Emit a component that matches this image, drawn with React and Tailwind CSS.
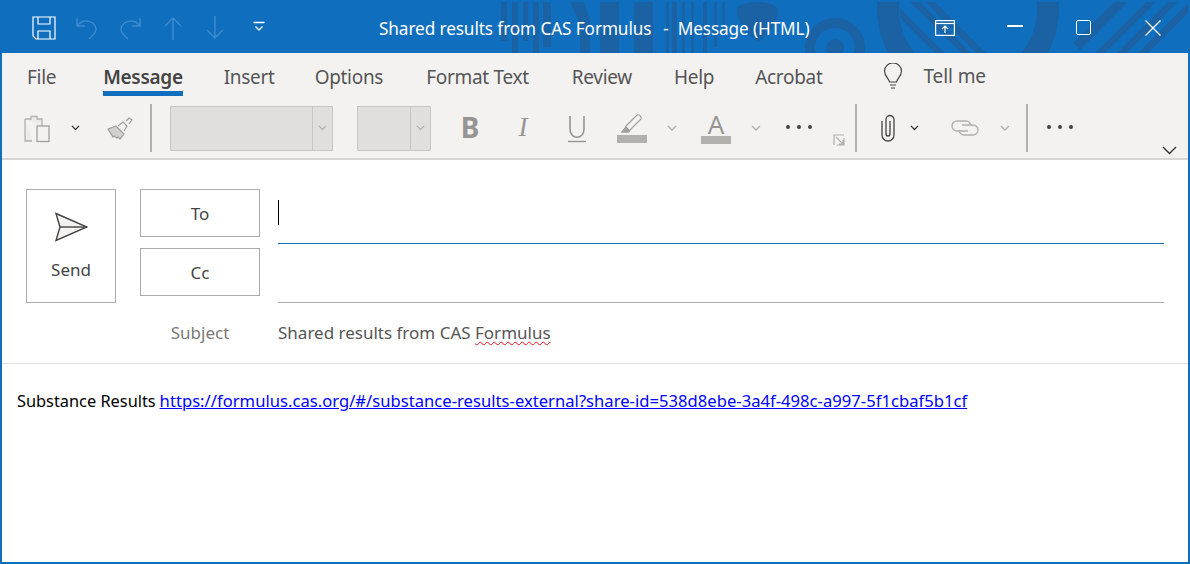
import React from "react";

const F = { fontFamily: '"Noto Sans", "Open Sans", sans-serif' };

function Chev({ c = "#444", w = 9, cls = "" }) {
  return (
    <svg width={w} height={w * 0.6} viewBox="0 0 10 6" className={cls}>
      <path d="M1 1l4 4 4-4" fill="none" stroke={c} strokeWidth="1.4" />
    </svg>
  );
}
function Dots({ c = "#444" }) {
  return (
    <svg width="28" height="6" viewBox="0 0 28 6">
      <circle cx="3" cy="3" r="2" fill={c} />
      <circle cx="14" cy="3" r="2" fill={c} />
      <circle cx="25" cy="3" r="2" fill={c} />
    </svg>
  );
}
function Sep() {
  return <div className="w-[2px] h-12 bg-[#b3b0ad] shrink-0" />;
}
function Tab({ children, active, cls = "" }) {
  return (
    <div className={`relative text-[19px] leading-[26px] tracking-[-0.3px] whitespace-nowrap ${cls} ${active ? "font-semibold text-[#444]" : "text-[#555]"}`}>
      {children}
      {active && <div className="absolute left-0 right-0 top-[27px] h-[5px] bg-[#106ebe]" />}
    </div>
  );
}

function Pattern() {
  return (
    <svg className="absolute left-[400px] top-[2px]" width="790" height="51" viewBox="0 0 790 51" fill="#1a62a4">
      <rect x="101" y="0" width="6" height="39" />
      <rect x="112" y="0" width="6" height="51" />
      <rect x="123" y="0" width="5.5" height="39" />
      <rect x="133" y="0" width="6" height="51" />
      <rect x="143" y="0" width="8" height="45" />
      <path d="M170 0H184L190 20V51H180V22Z" />
      <rect x="200" y="0" width="19" height="51" />
      <rect x="234" y="0" width="19" height="51" />
      <rect x="266" y="0" width="3" height="51" />
      <rect x="272" y="0" width="5" height="51" />
      <rect x="282" y="0" width="3" height="51" />
      <rect x="291" y="0" width="3" height="51" />
      <rect x="303" y="0" width="4" height="51" />
      <rect x="314" y="0" width="3" height="45" />
      <rect x="322" y="0" width="3" height="33" />
      <path d="M337 8C337 3 345 0 357 0C370 0 378 3 378 10C378 22 366 34 358 40C348 32 337 20 337 8Z" />
      <circle cx="435" cy="46" r="25" fill="none" stroke="#1a62a4" strokeWidth="10" />
      <circle cx="435" cy="46" r="9" />
      <circle cx="568" cy="7" r="80" fill="none" stroke="#1a62a4" strokeWidth="22" />
      <path d="M500 6L545 51H535L500 16Z" />
      <path d="M510 0H520L571 51H561Z" />
      <path d="M525 0H535L586 51H576Z" />
      <path d="M673 41L680 48L728 0H714Z" />
      <path d="M746 0H756L705 51H695Z" />
      <path d="M768 0H778L727 51H717Z" />
      <path d="M789 0H790V9L748 51H738Z" />
    </svg>
  );
}

function Titlebar() {
  const b = "#3d8bd0";
  return (
    <div className="relative h-[53px] bg-[#106ebe] flex items-center overflow-hidden shrink-0 pl-[32px] pt-[2px]">
      <Pattern />
      <div className="relative flex items-center">
        <svg width="24" height="24" viewBox="0 0 24 24" fill="none" stroke="#fff" strokeWidth="1.2">
          <path d="M1 1h22v22H4l-3-3z" /><path d="M6 1v7h12V1M6 23v-8h12v8" />
        </svg>
        <svg width="24" height="24" viewBox="0 0 24 24" fill="none" stroke={b} strokeWidth="1.4" className="ml-[19px]">
          <path d="M2 2v8h8M2 10c3-4 6-5 9-5 6 0 10 4 10 8 0 3-2 5-4 7l-3 3" />
        </svg>
        <svg width="24" height="24" viewBox="0 0 24 24" fill="none" stroke={b} strokeWidth="1.4" className="ml-[19px]">
          <path d="M22 2v8h-8M22 10c-3-4-6-5-9-5-6 0-10 4-10 8 0 3 2 5 4 7l3 3" />
        </svg>
        <svg width="18" height="24" viewBox="0 0 18 24" fill="none" stroke={b} strokeWidth="1.4" className="ml-[22px]">
          <path d="M9 24V2M1 10l8-8 8 8" />
        </svg>
        <svg width="18" height="24" viewBox="0 0 18 24" fill="none" stroke={b} strokeWidth="1.4" className="ml-[24px]">
          <path d="M9 0v22M1 14l8 8 8-8" />
        </svg>
        <svg width="12" height="12" viewBox="0 0 12 12" fill="none" stroke="#fff" strokeWidth="1.3" className="ml-[29px] mb-[2px]">
          <path d="M0.5 1.5h11M2.5 5.5L6 9l3.5-3.5" />
        </svg>
      </div>
      <div className="absolute left-[379px] top-[17px] text-white text-[17.2px] leading-[24px] whitespace-pre">
        <span className="tracking-[-0.1px]">Shared results from CAS Formulus</span>
        <span className="ml-[3px]">  -  </span>
        <span className="tracking-[-0.12px]">Message (HTML)</span>
      </div>
      <div className="absolute right-0 top-[2px] h-[51px] flex items-center">
        <svg width="20" height="16" viewBox="0 0 20 16" fill="none" stroke="#fff" strokeWidth="1.2" className="mr-[52px]">
          <rect x="0.6" y="0.6" width="18.8" height="14.8" /><path d="M1 3.5h18" /><path d="M10 13V6M7 9l3-3 3 3" />
        </svg>
        <div className="w-[16px] h-[1.4px] bg-white mr-[53px] mb-[3px]" />
        <div className="w-[15px] h-[15px] border-[1.3px] border-white rounded-[2px] mr-[54px]" />
        <svg width="16" height="16" viewBox="0 0 16 16" stroke="#fff" strokeWidth="1.3" className="mr-[29px]">
          <path d="M0.5 0.5l15 15M15.5 0.5l-15 15" />
        </svg>
      </div>
    </div>
  );
}

function Ribbon() {
  return (
    <div className="relative h-[107px] bg-[#f3f2f1] border-b-2 border-[#d8d6d4] shrink-0">
      <div className="flex items-center h-[49px] pl-[25px] pb-[1px]">
        <Tab>File</Tab>
        <Tab active cls="ml-[47px]">Message</Tab>
        <Tab cls="ml-[41px]">Insert</Tab>
        <Tab cls="ml-[40px]">Options</Tab>
        <Tab cls="ml-[43px]">Format Text</Tab>
        <Tab cls="ml-[43px]">Review</Tab>
        <Tab cls="ml-[42px]">Help</Tab>
        <Tab cls="ml-[41px]">Acrobat</Tab>
        <div className="flex items-center gap-[20px] ml-[61px] mt-[-2px]">
          <svg width="20" height="26" viewBox="0 0 20 26" fill="none" stroke="#444" strokeWidth="1.2">
            <path d="M6.5 19c0-3-5-5-5-11a8.5 8 0 0 1 17 0c0 6-5 8-5 11zM7 22h6M8 25h4" />
          </svg>
          <div className="text-[#555] text-[19px] leading-[26px] tracking-[-0.1px]">Tell me</div>
        </div>
      </div>
      <div className="flex items-center h-[52px] pl-[22px]">
        <svg width="27" height="29" viewBox="0 0 27 29" fill="#ebebeb" stroke="#b3b0ad" strokeWidth="1.3">
          <path d="M1 5h6V2.5h6V5h5v7M8 27H1V5" /><rect x="13" y="12" width="12" height="15.5" fill="#f3f2f1" stroke="#a19f9d" />
        </svg>
        <Chev cls="ml-[20px] mt-[-1px]" c="#333" />
        <svg width="28" height="26" viewBox="0 0 28 26" className="ml-[27px]" fill="none" stroke="#a19f9d" strokeWidth="1.2">
          <path d="M1 14l8-3 8 8-4 5-2-2-1 1-3-2-1 1z" fill="#d2d0ce" /><path d="M11 11l5-4 4 4-3 5M19 6l3-3 3 2-3 4" />
        </svg>
        <div className="ml-[15px]"><Sep /></div>
        <div className="ml-[18px] flex h-[45px] w-[163px] bg-[#e1dfdd] border border-[#c8c6c4]">
          <div className="flex-1" />
          <div className="w-[20px] border-l border-[#c8c6c4] flex items-center justify-center"><Chev c="#b3b0ad" /></div>
        </div>
        <div className="ml-[24px] flex h-[45px] w-[74px] bg-[#e1dfdd] border border-[#c8c6c4]">
          <div className="flex-1" />
          <div className="w-[20px] border-l border-[#c8c6c4] flex items-center justify-center"><Chev c="#b3b0ad" /></div>
        </div>
        <div className="ml-[29px] w-[20px] text-center text-[#979593] text-[28px] font-bold leading-[30px] mt-[-2px]">B</div>
        <div className="ml-[35px] w-[16px] text-center text-[#979593] text-[27px] leading-[30px] italic mt-[-2px]" style={{ fontFamily: '"Liberation Serif", serif' }}>I</div>
        <svg width="18" height="29" viewBox="0 0 18 29" fill="none" stroke="#979593" className="ml-[37px]">
          <path d="M2 2v13c0 11 14 11 14 0V2" strokeWidth="1.6" /><path d="M0 27.5h18" strokeWidth="1.4" />
        </svg>
        <div className="ml-[31px] w-[30px] flex flex-col items-center">
          <svg width="28" height="22" viewBox="0 0 28 22" fill="none" stroke="#a19f9d" strokeWidth="1.2">
            <path d="M8 13L19 2c2-1 5 2 4 4L12 17l-4 1zM8 14l-4 5 7 0 1-2" /><path d="M4 19l4-5 3 3-1 2z" fill="#a19f9d" />
          </svg>
          <div className="w-[30px] h-[8px] bg-[#b3b0ad]" />
        </div>
        <Chev cls="ml-[20px]" c="#b3b0ad" w={10} />
        <div className="ml-[24px] w-[30px] flex flex-col items-center">
          <div className="h-[22px] text-[#979593] text-[26px] leading-[22px]">A</div>
          <div className="w-[30px] h-[8px] bg-[#b3b0ad] mt-[1px]" />
        </div>
        <Chev cls="ml-[20px]" c="#b3b0ad" w={10} />
        <div className="ml-[24px] mb-[2px]"><Dots /></div>
        <svg width="12" height="12" viewBox="0 0 12 12" fill="none" stroke="#b3b0ad" strokeWidth="1.2" className="ml-[20px] mt-[23px]">
          <path d="M1 11V1h10M4 11h7V4M3 3l7 7M10 6v4H6" />
        </svg>
        <div className="ml-[10px]"><Sep /></div>
        <svg width="16" height="28" viewBox="0 0 16 28" fill="none" stroke="#444" strokeWidth="1.3" className="ml-[23px]">
          <path d="M2 7v14a6 6 0 0 0 12 0V5.5a4 4 0 0 0-8 0V20a2 2 0 0 0 4 0V7" />
        </svg>
        <Chev cls="ml-[14px]" c="#333" />
        <svg width="28" height="16" viewBox="0 0 28 16" fill="none" stroke="#b3b0ad" strokeWidth="1.4" className="ml-[32px]">
          <path d="M17 11H6a5 5 0 0 1 0-10h9a5 5 0 0 1 5 5" /><path d="M11 5h11a5 5 0 0 1 0 10h-9a5 5 0 0 1-5-5" />
        </svg>
        <Chev cls="ml-[21px]" c="#b3b0ad" w={10} />
        <div className="ml-[16px]"><Sep /></div>
        <div className="ml-[18px] mb-[2px]"><Dots /></div>
      </div>
      <svg width="15" height="9" viewBox="0 0 15 9" fill="none" stroke="#333" strokeWidth="1.4" className="absolute right-[11px] top-[93px]">
        <path d="M1 1l6.5 6.5L14 1" />
      </svg>
    </div>
  );
}

function Btn({ children }) {
  return (
    <div className="w-[120px] h-[48px] pt-[1px] border border-[#ababab] flex items-center justify-center text-[#444] text-[17px]">
      {children}
    </div>
  );
}

function Header() {
  return (
    <div className="h-[204px] border-b border-[#e1dfdd] pl-[24px] pt-[29px] flex shrink-0">
      <div className="w-[90px] h-[114px] border border-[#ababab] flex flex-col items-center text-[#444] text-[17px]">
        <svg width="34" height="30" viewBox="0 0 34 30" fill="none" stroke="#444" strokeWidth="1.4" className="mt-[22px]">
          <path d="M2 1.5L33 15 2 28.5 6 15z" fill="#f3f2f1" /><path d="M6 15h27" />
        </svg>
        <div className="mt-[16px] leading-[24px]">Send</div>
      </div>
      <div className="ml-[24px] flex flex-col gap-[11px]">
        <Btn>To</Btn>
        <Btn>Cc</Btn>
        <div className="w-[120px] text-center mt-[14px] text-[17px] leading-[24px] text-[#7a7a7a]">Subject</div>
      </div>
      <div className="ml-[18px] w-[886px] flex flex-col">
        <div className="h-[55px] border-b border-[#106ebe] pt-[11px]">
          <div className="w-[1px] h-[25px] bg-black" />
        </div>
        <div className="h-[59px] border-b border-[#ababab]" />
        <div className="mt-[18px] text-[17px] leading-[24px] text-[#555] whitespace-pre">
          Shared results from CAS{" "}
          <span className="underline decoration-wavy decoration-[#e81123] decoration-1 underline-offset-2">Formulus</span>
        </div>
      </div>
    </div>
  );
}

export default function App() {
  return (
    <div className="w-[1190px] h-[564px] overflow-hidden bg-white flex flex-col border-x-2 border-b-2 border-[#106ebe] box-border" style={F}>
      <div className="mx-[-2px]"><Titlebar /></div>
      <Ribbon />
      <Header />
      <div className="pl-[15px] pt-[25px] text-[16.6px] leading-[24px] text-black whitespace-nowrap">
        <span className="text-[16.35px]">Substance Results</span>
        <span className="text-[15px]"> </span>
        <span className="text-[#0000ff] underline tracking-[0.02px]">https://formulus.cas.org/#/substance-results-external?share-id=538d8ebe-3a4f-498c-a997-5f1cbaf5b1cf</span>
      </div>
    </div>
  );
}
